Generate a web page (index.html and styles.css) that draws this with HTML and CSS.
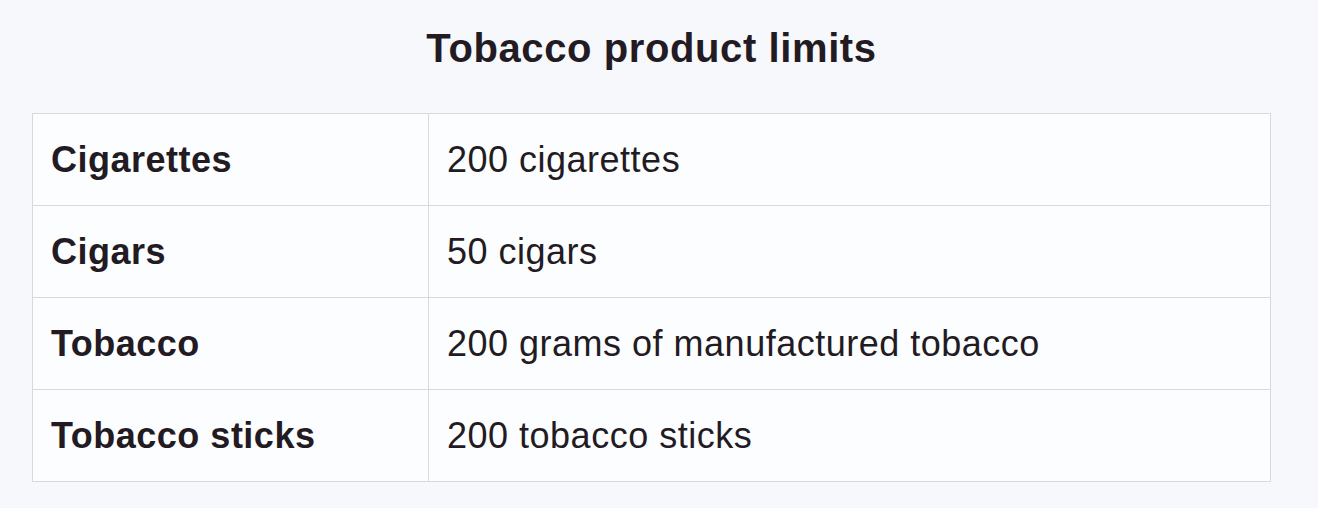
FILE: index.html
```html
<!DOCTYPE html>
<html lang="en">
<head>
<meta charset="utf-8">
<title>Tobacco product limits</title>
<link rel="stylesheet" href="styles.css">
</head>
<body>
<main class="page">
  <h1 class="title">Tobacco product limits</h1>
  <table class="limits">
    <tbody>
      <tr><th>Cigarettes</th><td>200 cigarettes</td></tr>
      <tr><th>Cigars</th><td>50 cigars</td></tr>
      <tr><th>Tobacco</th><td>200 grams of manufactured tobacco</td></tr>
      <tr><th>Tobacco sticks</th><td>200 tobacco sticks</td></tr>
    </tbody>
  </table>
</main>
</body>
</html>
```

FILE: styles.css
```css
html, body {
  margin: 0;
  padding: 0;
  background: #f7f8fb;
}
body {
  font-family: "Liberation Sans", Arial, Helvetica, sans-serif;
  color: #231b23;
}
.page {
  width: 1239px;
  margin-left: 32px;
  padding-top: 20px;
}
.title {
  margin: 0 0 37px 0;
  text-align: center;
  font-size: 40px;
  letter-spacing: 0.6px;
  line-height: 56px;
  font-weight: 700;
}
.limits {
  width: 100%;
  border-collapse: collapse;
  background: #fcfdfe;
  border: 1px solid #d6d9dd;
}
.limits th,
.limits td {
  border: 1px solid #d6d9dd;
  height: 92px;
  padding: 0 18px;
  text-align: left;
  vertical-align: middle;
  font-size: 36px;
  letter-spacing: 0.5px;
  box-sizing: border-box;
}
.limits th {
  width: 396px;
  font-weight: 700;
}
.limits td {
  font-weight: 400;
}
```
